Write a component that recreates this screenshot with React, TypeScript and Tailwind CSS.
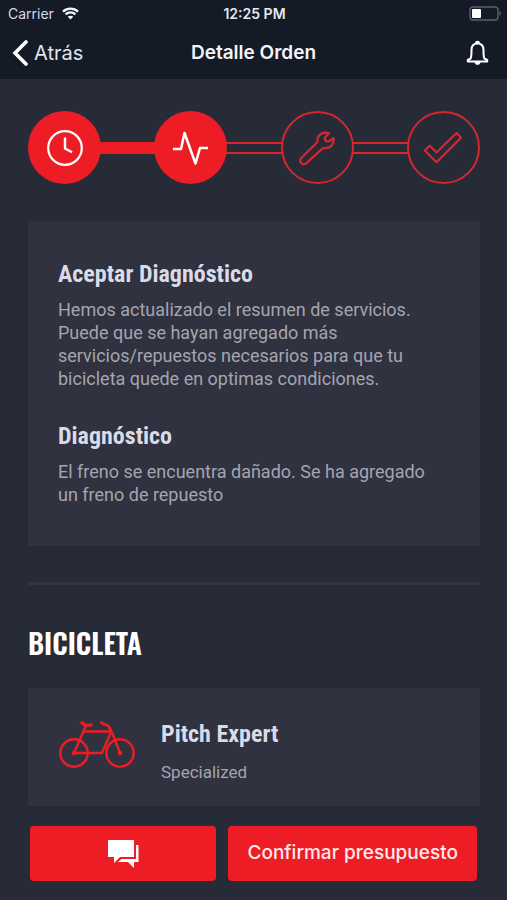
import type { ReactNode } from "react";

const condensed =
  "font-['Roboto_Condensed','Liberation_Sans_Narrow',Roboto,sans-serif]";

function StatusBar() {
  return (
    <div className="grid h-[27px] grid-cols-3 items-center pr-[6px] pl-2 text-sm text-[#d8dae2]">
      <div className="flex items-center gap-2">
        <span>Carrier</span>
        <svg width="17" height="13" viewBox="0 0 17 13" fill="none" stroke="#f4f5fa" strokeWidth="2.3">
          <path d="M1 4.6C5.2.7 11.8.7 16 4.6M3.6 7.4c2.8-2.6 7-2.6 9.8 0" />
          <path d="M8.5 12.6 5.7 9.7c1.6-1.4 4-1.4 5.6 0z" fill="#f4f5fa" stroke="none" />
        </svg>
      </div>
      <span className="text-center font-semibold whitespace-nowrap text-[#e6e8ef]">12:25 PM</span>
      <svg className="justify-self-end" width="32" height="15" viewBox="0 0 32 15" fill="none">
        <rect x="1" y="1" width="28" height="13" rx="3" stroke="#5b606c" strokeWidth="1.4" />
        <rect x="3" y="3" width="9" height="9" rx="1" fill="#fff" />
        <path d="M30.500 5v5c1.800-1 1.800-4 0-5z" fill="#5b606c" />
      </svg>
    </div>
  );
}

function Header() {
  return (
    <header className="bg-[#141a26]">
      <StatusBar />
      <div className="grid h-[52px] grid-cols-[1fr_auto_1fr] items-center px-3">
        <button type="button" className="flex items-center gap-[6px] text-xl text-[#e2e4ec]">
          <svg width="16" height="26" viewBox="0 0 16 26" fill="none" stroke="#fff" strokeWidth="3.6">
            <path d="M14 2 3 13l11 11" strokeLinecap="round" />
          </svg>
          Atrás
        </button>
        <h1 className="text-[19px] font-semibold text-[#f2f3f8]">Detalle Orden</h1>
        <button type="button" aria-label="Notificaciones" className="justify-self-end px-[6px]">
          <svg width="23" height="26" viewBox="0 0 23 26" fill="none" stroke="#fff" strokeWidth="2" strokeLinejoin="round">
            <path d="M11.5 3.500C7.800 3.500 5.500 6 5.500 10c0 4.500-.2 7-.8 8.500L1.800 20v1.500h19.400V20l-2.900-1.500c-.6-1.500-.8-4-.8-8.500 0-4-2.300-6.500-6-6.500z" />
            <path d="M10 3.500c0-2.500 3-2.500 3 0" />
            <path d="M8.500 22c.5 3.800 5.500 3.800 6 0z" fill="#fff" stroke="none" />
          </svg>
        </button>
      </div>
    </header>
  );
}

function Step({ label, done, children }: { label: string; done?: boolean; children: ReactNode }) {
  return (
    <li
      aria-label={label}
      className={
        done
          ? "flex size-[73px] shrink-0 items-center justify-center rounded-full bg-[#ee1d25] text-white"
          : "flex size-[73px] shrink-0 items-center justify-center rounded-full border-2 border-[#d9252e] text-[#d9252e]"
      }
    >
      <svg width="40" height="40" viewBox="0 0 40 40" fill="none" stroke="currentColor" strokeWidth="2.200" strokeLinejoin="round">
        {children}
      </svg>
    </li>
  );
}

function Connector({ done }: { done?: boolean }) {
  return (
    <li
      aria-hidden="true"
      className={done ? "-mx-px h-3 flex-1 bg-[#ee1d25]" : "-mx-px h-3 flex-1 border-y-2 border-[#d9252e]"}
    />
  );
}

function Progress() {
  return (
    <ol className="flex items-center">
      <Step label="Recibida" done>
        <circle cx="20" cy="20" r="16.800" />
        <path d="M20 9.500v11l7 3.800" strokeWidth="2.400" />
      </Step>
      <Connector done />
      <Step label="Diagnóstico" done>
        <path d="M2 21h8l3.500-16 11 30.500L29 20h8" strokeWidth="2.500" />
      </Step>
      <Connector />
      <Step label="Reparación">
        <path d="M4.500 29.800 19.800 14.700c.9-.9.700-1.800.8-3.200.5-5.100 5.300-8.100 11.300-6.300l-4.300 4.700 1.200 3.200 3.300.3 4.300-3.300c1 5.900-2.600 10.200-8.200 10.100-1.700-.1-2.600.1-3.400.9L9.300 35.200c-3.700 3.100-8.100-1.500-4.800-5.400z" />
      </Step>
      <Connector />
      <Step label="Lista">
        <path d="M1.800 22.500 6.700 17.600 13.500 24.500 33.500 5 38 9.600 13.500 34.200z" />
      </Step>
    </ol>
  );
}

function BikeIcon() {
  return (
    <svg className="shrink-0" width="76" height="53" viewBox="0 -4 76 53" fill="none" stroke="#ee1d25" strokeWidth="2.400" strokeLinejoin="round">
      <circle cx="15" cy="33" r="13.700" />
      <circle cx="61" cy="33" r="13.700" />
      <path d="M15 33 27 5.500M24.500 11.500H52M15 33h28l9-21M61 33 53 12.500" />
      <path d="M42 1.200c.8 2 2 3 4 3.300 3.500.4 4.800 3 7 8" strokeWidth="2.600" />
      <path d="M21.500 2.500c2-2 3.500.7 5.500 1.500 2 .7 3.500 0 6 0v2c-3 0-5 .3-7 0s-3-2.200-4.500-3.500z" fill="#ee1d25" strokeWidth="1.200" />
      <path d="M15 33h.1M61 33h.1" strokeWidth="4.500" strokeLinecap="round" />
    </svg>
  );
}

function Note({ title, children }: { title: string; children: ReactNode }) {
  return (
    <section>
      <h2 className={`${condensed} text-2xl leading-7 font-bold text-[#d9dbe9]`}>{title}</h2>
      <p className="mt-[10px] text-lg leading-[23px] text-[#a4a5b0]">{children}</p>
    </section>
  );
}

export default function App() {
  return (
    <div className="flex min-h-screen flex-col bg-[#262b37] font-[Inter,sans-serif]">
      <Header />
      <main className="pt-8 pr-[27px] pl-7 font-[Roboto,sans-serif]">
        <Progress />

        <div className="mt-[37px] flex flex-col gap-8 bg-[#30323f] pt-[39px] pr-10 pb-10 pl-[30px]">
          <Note title="Aceptar Diagnóstico">
            Hemos actualizado el resumen de servicios. Puede que se hayan agregado más
            servicios/repuestos necesarios para que tu bicicleta quede en optimas condiciones.
          </Note>
          <Note title="Diagnóstico">
            El freno se encuentra dañado. Se ha agregado un freno de repuesto
          </Note>
        </div>

        <hr className="mt-9 border-t-3 border-[#323641]" />

        <h2 className="mt-10 font-[Oswald,'Roboto_Condensed','Liberation_Sans_Narrow',Roboto,sans-serif] text-[28px] leading-9 font-semibold text-white">
          BICICLETA
        </h2>
        <div className="mt-[27px] flex items-start gap-[26px] bg-[#30323f] px-[31px] pt-7 pb-5">
          <BikeIcon />
          <div>
            <h3 className={`${condensed} text-2xl leading-9 font-bold text-[#d9dbe9]`}>Pitch Expert</h3>
            <p className="mt-1.5 text-[17px] leading-7 text-[#a4a5b0]">Specialized</p>
          </div>
        </div>
      </main>

      <footer className="mt-5 flex gap-3 px-[30px] pb-[19px] text-[19px] font-medium text-[#ffe9ea]">
        <button type="button" aria-label="Mensajes" className="flex h-[55px] flex-3 items-center justify-center rounded bg-[#ee1d25]">
          <svg width="31" height="28" viewBox="0 0 31 28" fill="#fff">
            <path d="M0 0h26v17H12l-6 6v-6H0z" />
            <path d="M28 5h2.500v17H26v6l-6-6H10l3.500-3H28z" />
          </svg>
        </button>
        <button type="button" className="h-[55px] flex-4 rounded bg-[#ee1d25] whitespace-nowrap">
          Confirmar presupuesto
        </button>
      </footer>
    </div>
  );
}
